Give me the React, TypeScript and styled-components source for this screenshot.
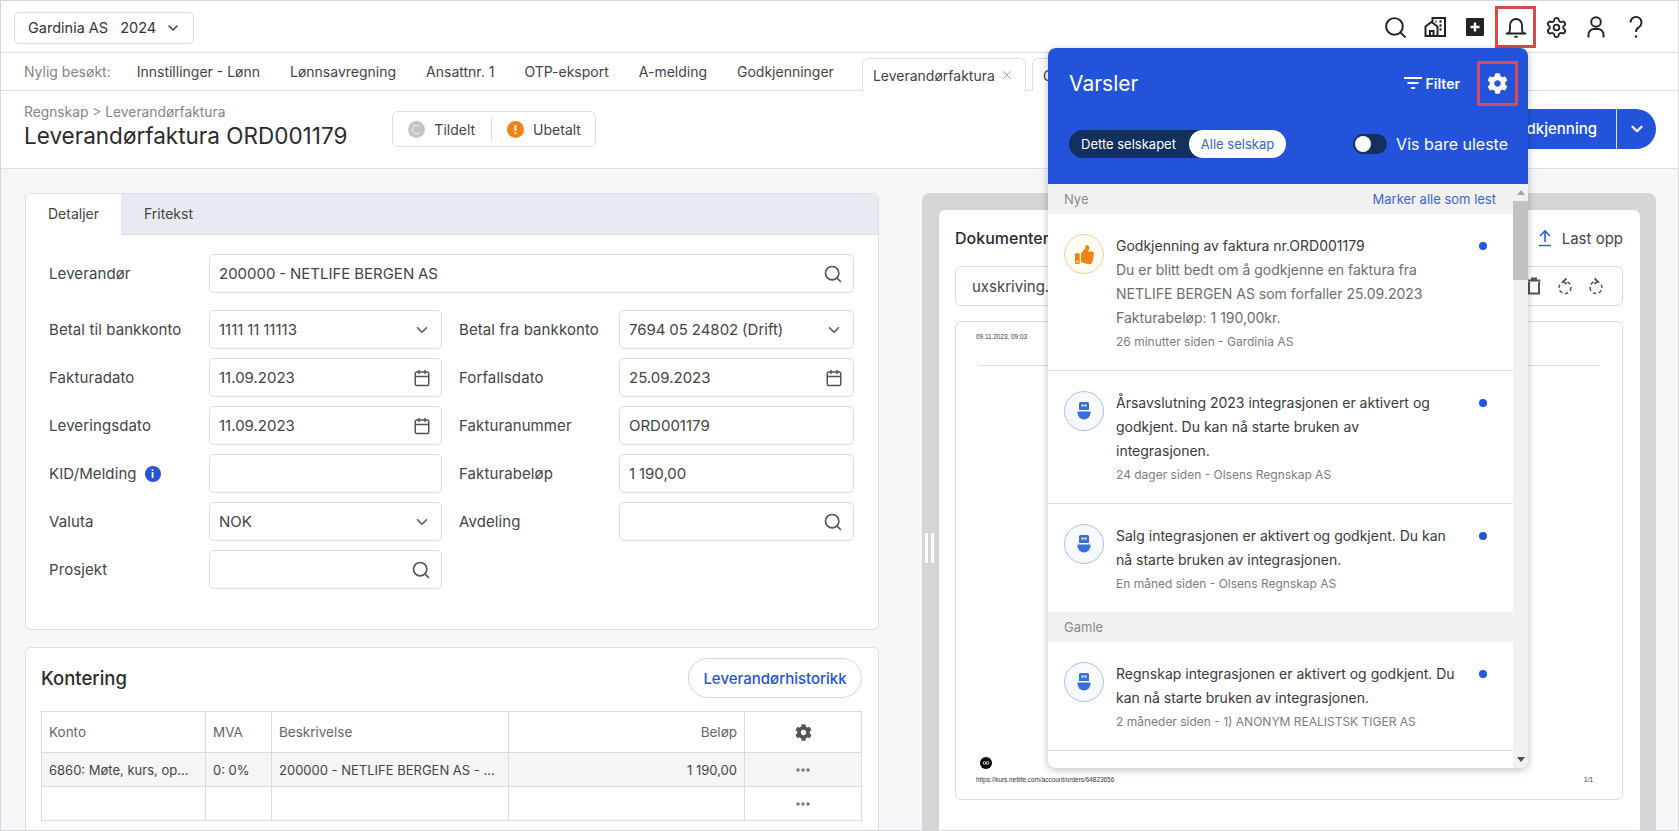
import React from 'react';
import styled, { createGlobalStyle } from 'styled-components';
import { Search, ChevronDown, Calendar, Settings, X } from 'lucide-react';
import { FaCog, FaThumbsUp } from 'react-icons/fa';

const Global = createGlobalStyle`
  html, body { margin: 0; padding: 0; height: 831px; overflow: hidden; background: #fff; }
  * { box-sizing: border-box; }
  body { font-family: Inter, "Liberation Sans", sans-serif; color: #333; }
`;

const Frame = styled.div`
  position: relative;
  width: 1679px;
  height: 831px;
  border: 1px solid #d3d6da;
  display: flex;
  flex-direction: column;
  overflow: hidden;
  background: #fff;
`;

const TopBar = styled.header`
  height: 52px;
  flex: none;
  border-bottom: 1px solid #dcdfe3;
  display: flex;
  align-items: center;
  justify-content: space-between;
  padding: 0 22px 0 13px;
`;
const CompanySelect = styled.button`
  width: 180px;
  height: 32px;
  margin-top: 2px;
  background: #fff;
  border: 1px solid #d9dce0;
  border-radius: 5px;
  display: flex;
  align-items: center;
  padding: 0 12px 0 13px;
  font: 400 14.5px Inter, sans-serif;
  color: #333;
  svg { margin-left: auto; }
`;
const Year = styled.span`
  margin-left: 12px;
`;
const IconBar = styled.div`
  display: flex;
  align-items: center;
  margin-top: 1px;
`;
const TopIcon = styled.div<{ $active?: boolean }>`
  position: relative;
  width: 40px;
  height: 42px;
  display: flex;
  align-items: center;
  justify-content: center;
  color: #222;
  ${p => p.$active && 'outline: 3px solid #d84a4a; outline-offset: -3px; width: 41px;'}
`;

const TabsRow = styled.nav`
  height: 38px;
  flex: none;
  border-bottom: 1px solid #dcdfe3;
  display: flex;
  align-items: center;
  padding-left: 23px;
  font-size: 14px;
`;
const TabsLabel = styled.span`
  color: #858585;
  margin-right: 26px;
`;
const TabLink = styled.a`
  color: #444;
  margin-right: 30px;
  white-space: nowrap;
`;
const ActiveTab = styled.div`
  height: 33px;
  align-self: flex-end;
  margin-bottom: -1px;
  width: 164px;
  margin-right: 6px;
  margin-left: -2px;
  background: #fff;
  border: 1px solid #dcdfe3;
  border-bottom: 0;
  border-radius: 6px 6px 0 0;
  display: flex;
  align-items: center;
  padding-left: 10px;
  color: #444;
  white-space: nowrap;
  svg { margin-left: 5px; color: #999; }
`;
const NextTab = styled(ActiveTab)`
  width: 120px;
  margin: 0 0 -1px;
`;

const PageHeader = styled.div`
  height: 78px;
  flex: none;
  border-bottom: 1px solid #dcdfe3;
  display: flex;
  align-items: flex-start;
  padding: 11px 22px 0 23px;
`;
const TitleBlock = styled.div`
  margin-right: 45px;
`;
const Breadcrumb = styled.div`
  font-size: 13.8px;
  line-height: 20px;
  color: #858585;
`;
const Title = styled.h1`
  margin: 0;
  font-size: 22.5px;
  font-weight: 400;
  line-height: 28px;
  color: #2b2b2b;
  white-space: nowrap;
`;
const StatusPill = styled.div`
  height: 36px;
  width: 204px;
  margin-top: 9px;
  border: 1px solid #dcdfe3;
  border-radius: 6px;
  display: flex;
  align-items: center;
  font-size: 14px;
  color: #444;
  padding-left: 15px;
`;
const StatusDivider = styled.span`
  width: 1px;
  height: 24px;
  background: #dcdfe3;
  margin: 0 15px 0 16px;
`;
const StatusIcon = styled.span<{ $tone: 'grey' | 'orange' }>`
  width: 17px;
  height: 17px;
  border-radius: 50%;
  margin-right: 9px;
  display: flex;
  align-items: center;
  justify-content: center;
  color: #fff;
  font-size: 12px;
  font-weight: 700;
  background: ${p => (p.$tone === 'grey' ? '#c3c4c6' : '#ef8412')};
`;
const GreyRing = styled.span`
  width: 9px;
  height: 9px;
  border-radius: 50%;
  border: 1.5px solid #eceded;
  border-right-color: transparent;
`;
const ApproveGroup = styled.div`
  margin-left: auto;
  margin-top: 7px;
  height: 40px;
  display: flex;
  background: #2453db;
  border-radius: 20px;
  color: #fff;
  font-size: 15px;
  font-weight: 500;
  align-items: center;
`;
const ApproveMain = styled.span`
  padding: 0 19px 0 24px;
  line-height: 40px;
  border-right: 1px solid #dfe6fa;
`;
const ApproveCaret = styled.span`
  width: 39px;
  display: flex;
  justify-content: center;
`;

const Main = styled.main`
  flex: 1;
  min-height: 0;
  background: #f4f6f8;
  display: flex;
  align-items: flex-start;
  padding: 24px 22px 0 24px;
  gap: 43px;
`;
const LeftColumn = styled.div`
  width: 854px;
  flex: none;
  display: flex;
  flex-direction: column;
  gap: 17px;
`;
const Panel = styled.section`
  background: #fff;
  border: 1px solid #dcdfe3;
  border-radius: 6px;
  overflow: hidden;
`;
const PanelTabs = styled.div`
  height: 41px;
  display: flex;
  background: #e6ebf2;
  border-bottom: 1px solid #d6dbe2;
  font-size: 14px;
  color: #444;
`;
const PanelTab = styled.div<{ $active?: boolean }>`
  width: ${p => (p.$active ? '95px' : 'auto')};
  padding-left: ${p => (p.$active ? '22px' : '23px')};
  line-height: 40px;
  height: ${p => (p.$active ? '41px' : '40px')};
  background: ${p => (p.$active ? '#fff' : 'transparent')};
`;
const FieldGrid = styled.div`
  display: grid;
  grid-template-columns: 160px 233px 177px 235px;
  row-gap: 9px;
  padding: 19px 0 40px 23px;
  align-items: center;
`;
const FieldLabel = styled.label<{ $right?: boolean }>`
  font-size: 15px;
  letter-spacing: 0.1px;
  color: #444;
  display: flex;
  align-items: center;
  gap: 8px;
  padding-left: ${p => (p.$right ? '17px' : '0')};
`;
const Field = styled.div<{ $wide?: boolean }>`
  height: 39px;
  border: 1px solid #d9dce0;
  border-radius: 5px;
  background: #fff;
  display: flex;
  align-items: center;
  justify-content: space-between;
  padding: 0 10px 0 9px;
  font-size: 15px;
  word-spacing: -0.4px;
  color: #444;
  ${p => p.$wide && 'grid-column: 2 / 5; margin-bottom: 8px;'}
  svg { color: #555; flex: none; }
`;
const WideLabel = styled(FieldLabel)`
  margin-bottom: 8px;
`;
const InfoDot = styled.span`
  width: 16px;
  height: 16px;
  border-radius: 50%;
  background: #2453db;
  color: #fff;
  font-size: 11px;
  font-weight: 700;
  display: flex;
  align-items: center;
  justify-content: center;
`;

const KonteringPanel = styled(Panel)`
  height: 220px;
  padding: 10px 16px 0 15px;
`;
const KonteringHead = styled.div`
  height: 40px;
  display: flex;
  align-items: center;
  justify-content: space-between;
  margin-bottom: 13px;
`;
const KonteringTitle = styled.h2`
  margin: 0;
  font-size: 18.5px;
  font-weight: 500;
  color: #2b2b2b;
`;
const OutlineButton = styled.button`
  width: 174px;
  height: 40px;
  border: 1px solid #d2d6db;
  border-radius: 20px;
  background: #fff;
  color: #2453db;
  font: 500 15px Inter, sans-serif;
  padding: 0;
`;
const Table = styled.table`
  width: 820px;
  border-collapse: collapse;
  table-layout: fixed;
  font-size: 13px;
  color: #444;
`;
const Th = styled.th<{ $w: number; $end?: boolean; $center?: boolean }>`
  width: ${p => p.$w}px;
  height: 41px;
  border: 1px solid #d9dce0;
  font-weight: 400;
  font-size: 13.5px;
  color: #666;
  padding: 0 7px;
  text-align: ${p => (p.$end ? 'right' : p.$center ? 'center' : 'left')};
  svg { display: block; margin: 0 auto; color: #555; }
`;
const Tr = styled.tr<{ $shade?: boolean }>`
  background: ${p => (p.$shade ? '#f5f5f5' : '#fff')};
`;
const Td = styled.td<{ $end?: boolean; $center?: boolean }>`
  height: 34px;
  border: 1px solid #d9dce0;
  padding: 0 7px;
  white-space: nowrap;
  overflow: hidden;
  text-align: ${p => (p.$end ? 'right' : p.$center ? 'center' : 'left')};
  svg { display: block; margin: 0 auto; color: #666; }
`;

const DocFrame = styled.section`
  position: relative;
  width: 734px;
  flex: none;
  align-self: stretch;
  background: #d3d5d6;
  border-radius: 8px 8px 0 0;
  padding: 17px 17px 0;
  display: flex;
`;
const Handle = styled.div`
  position: absolute;
  left: 3px;
  top: 340px;
  width: 9px;
  height: 30px;
  border-left: 3px solid #fff;
  border-right: 3px solid #fff;
`;
const DocCard = styled.div`
  flex: 1;
  background: #fff;
  border-radius: 6px 6px 0 0;
  padding: 14px 17px 0 16px;
`;
const DocHead = styled.div`
  height: 28px;
  display: flex;
  align-items: center;
  justify-content: space-between;
  margin-bottom: 14px;
`;
const DocTitle = styled.h3`
  margin: 0;
  font-size: 16px;
  font-weight: 500;
  color: #2b2b2b;
`;
const UploadLink = styled.div`
  display: flex;
  align-items: center;
  gap: 10px;
  font-size: 15px;
  color: #444;
`;
const FileBar = styled.div`
  height: 40px;
  border: 1px solid #d9dce0;
  border-radius: 6px;
  display: flex;
  align-items: center;
  padding: 0 17px 0 16px;
  font-size: 15px;
  color: #444;
  margin-bottom: 15px;
`;
const FileTools = styled.div`
  margin-left: auto;
  display: flex;
  gap: 13px;
  color: #555;
`;
const Preview = styled.div`
  height: 479px;
  border: 1px solid #d9dce0;
  border-radius: 6px;
  padding: 11px 20px 0;
  font-family: "Liberation Sans", sans-serif;
  font-size: 6.4px;
  color: #333;
  display: flex;
  flex-direction: column;
`;
const PreviewRule = styled.div`
  height: 1px;
  margin: 25px 2px 0 2px;
  width: 622px;
  background: #dcdcdc;
`;
const PreviewLogo = styled.div`
  margin-top: auto;
  margin-left: 4px;
  width: 12px;
  height: 12px;
  border-radius: 50%;
  background: #000;
  display: flex;
  align-items: center;
  justify-content: center;
`;
const PreviewFoot = styled.div`
  display: flex;
  justify-content: space-between;
  margin: 7px 9px 16px 0;
`;

const Popup = styled.aside`
  position: absolute;
  left: 1047px;
  top: 47px;
  width: 480px;
  height: 720px;
  border-radius: 8px;
  overflow: hidden;
  background: #fff;
  box-shadow: 0 2px 8px rgba(0, 0, 0, 0.25);
  display: flex;
  flex-direction: column;
  z-index: 5;
`;
const PopupHead = styled.div`
  height: 136px;
  flex: none;
  background: #2453db;
  color: #fff;
  padding: 0 20px 0 21px;
`;
const PopupTop = styled.div`
  height: 82px;
  display: flex;
  align-items: center;
  padding-bottom: 12px;
`;
const PopupTitle = styled.h2`
  margin: 0;
  flex: 1;
  font-size: 21px;
  font-weight: 400;
`;
const FilterButton = styled.div`
  display: flex;
  align-items: center;
  gap: 3px;
  font-size: 14px;
  font-weight: 600;
`;
const GearBox = styled.div`
  position: relative;
  width: 41px;
  height: 45px;
  margin-left: 17px;
  margin-right: -10px;
  border: 3px solid #d84a5a;
  display: flex;
  align-items: center;
  justify-content: center;
`;
const PopupControls = styled.div`
  display: flex;
  align-items: center;
  justify-content: space-between;
`;
const Segment = styled.div`
  width: 217px;
  height: 28px;
  border-radius: 14px;
  background: #12305e;
  display: flex;
  align-items: center;
  justify-content: space-between;
  padding-left: 12px;
  font-size: 13px;
`;
const SegmentOn = styled.span`
  width: 97px;
  height: 28px;
  border-radius: 14px;
  background: #fff;
  color: #3a5fcf;
  font-size: 13px;
  line-height: 28px;
  text-align: center;
`;
const UnreadToggle = styled.div`
  display: flex;
  align-items: center;
  gap: 9px;
  font-size: 16px;
`;
const Switch = styled.span`
  width: 34px;
  height: 20px;
  border-radius: 10px;
  background: #12305e;
  padding: 2px;
  display: flex;
`;
const Knob = styled.span`
  width: 16px;
  height: 16px;
  border-radius: 50%;
  background: #fff;
`;
const PopupBody = styled.div`
  flex: 1;
  min-height: 0;
  display: flex;
`;
const List = styled.div`
  width: 465px;
  flex: none;
`;
const Section = styled.div`
  height: 30px;
  background: #f1f1f1;
  display: flex;
  align-items: center;
  justify-content: space-between;
  padding: 0 16px;
  font-size: 13px;
  color: #8a8a8a;
`;
const MarkAll = styled.span`
  color: #3b66d8;
  margin-right: 1px;
`;
const Item = styled.article<{ $line?: boolean }>`
  display: flex;
  align-items: flex-start;
  padding: 20px 26px 16px 16px;
  border-bottom: ${p => (p.$line ? '1px solid #d9dce0' : '0')};
`;
const Badge = styled.div<{ $tone: 'orange' | 'blue' }>`
  width: 40px;
  height: 40px;
  flex: none;
  border-radius: 50%;
  display: flex;
  align-items: center;
  justify-content: center;
  margin-right: 12px;
  border: 1px solid ${p => (p.$tone === 'orange' ? '#f4cf98' : '#a9c1ec')};
  background: ${p => (p.$tone === 'orange' ? '#fffaf2' : '#f6f9ff')};
  color: ${p => (p.$tone === 'orange' ? '#ef8412' : '#3b6fd6')};
`;
const ItemText = styled.div`
  width: 346px;
  flex: none;
  font-size: 14px;
  line-height: 24px;
  color: #3a3a3a;
`;
const ItemBody = styled.div`
  color: #6e6e6e;
`;
const ItemMeta = styled.div`
  font-size: 12px;
  color: #7d7d7d;
`;
const UnreadDot = styled.span`
  width: 8px;
  height: 8px;
  border-radius: 50%;
  background: #2255e0;
  margin: 8px 0 0 17px;
  flex: none;
`;
const ScrollTrack = styled.div`
  width: 15px;
  flex: none;
  background: #f1f1f1;
  display: flex;
  flex-direction: column;
  align-items: center;
`;
const ScrollArrow = styled.span<{ $down?: boolean }>`
  flex: none;
  height: 17px;
  display: flex;
  align-items: center;
  &::before {
    content: '';
    border-left: 4px solid transparent;
    border-right: 4px solid transparent;
    ${p => (p.$down ? 'border-top: 5px solid #505050;' : 'border-bottom: 5px solid #a3a3a3;')}
  }
`;
const ScrollThumb = styled.span`
  width: 100%;
  height: 79px;
  background: #c1c1c1;
`;
const ScrollGap = styled.span`
  flex: 1;
`;

const BuildingIcon = () => (
  <svg width="24" height="24" viewBox="0 0 24 24" fill="none" stroke="currentColor" strokeWidth="2">
    <path d="M9.5 6.5V3H22v18H2.5V11.5L8.5 7l6 4.5V21" />
    <path d="M7 21v-5h3.5v5" />
    <path d="M16.5 6.5h2M16.5 10.5h2M16.5 14.5h2M12.5 6.5h1" strokeWidth="2.4" />
  </svg>
);
const PlusSquareIcon = () => (
  <svg width="18" height="18" viewBox="0 0 18 18">
    <rect width="18" height="18" rx="1" fill="#232323" />
    <path d="M9 4.5v9M4.5 9h9" stroke="#fff" strokeWidth="2.4" />
  </svg>
);
const BellIcon = () => (
  <svg width="24" height="24" viewBox="0 0 24 24" fill="none" stroke="currentColor" strokeWidth="1.8">
    <path d="M2.5 18.5h19" strokeLinecap="round" />
    <path d="M4.5 18.5c1-1 1.5-2.5 1.5-4.500v-4a6 6 0 0 1 12 0v4c0 2 .5 3.500 1.500 4.500" />
    <ellipse cx="12" cy="21.8" rx="2" ry="1" fill="currentColor" stroke="none" />
  </svg>
);
const UserIcon = () => (
  <svg width="24" height="24" viewBox="0 0 24 24" fill="none" stroke="currentColor" strokeWidth="1.9">
    <circle cx="12" cy="7" r="4.8" />
    <path d="M4.500 22.500v-3a5.500 5.500 0 0 1 5.500-5.500h4a5.500 5.500 0 0 1 5.500 5.500v3" />
  </svg>
);
const HelpIcon = () => (
  <svg width="24" height="24" viewBox="0 0 24 24" fill="none" stroke="currentColor" strokeWidth="1.9">
    <path d="M6.500 7.500a5.500 5.500 0 1 1 8.500 4.500c-2 1.300-3 2.500-3 5" />
    <circle cx="12" cy="21.5" r="1.2" fill="currentColor" stroke="none" />
  </svg>
);
const FilterIcon = () => (
  <svg width="20" height="16" viewBox="0 0 20 16" fill="none" stroke="#fff" strokeWidth="2">
    <path d="M1 3h18M4.500 8h11M8 13h4" />
  </svg>
);
const RobotIcon = () => (
  <svg width="20" height="22" viewBox="0 0 20 22" fill="currentColor">
    <path d="M6.500 2h7a1.500 1.500 0 0 1 1.500 1.500V10H5V3.500A1.500 1.500 0 0 1 6.500 2z" />
    <rect x="7.5" y="4.5" width="2" height="2" fill="#f6f9ff" />
    <rect x="10.5" y="4.5" width="2" height="2" fill="#f6f9ff" />
    <path d="M3.500 11.500h13v1.500a6.500 6.500 0 0 1-13 0z" />
  </svg>
);
const UploadIcon = () => (
  <svg width="14" height="18" viewBox="0 0 14 18" fill="none" stroke="#2f5fd8" strokeWidth="1.6">
    <path d="M7 13V2M2 7l5-5 5 5M1 16.500h12" />
  </svg>
);
const TrashIcon = () => (
  <svg width="18" height="18" viewBox="0 0 18 18" fill="none" stroke="#555" strokeWidth="2">
    <path d="M4 5v11.500h10V5M2.500 3.500h13M6 1.500h6" />
  </svg>
);
const RotateIcon = ({ flip }: { flip?: boolean }) => (
  <svg width="18" height="18" viewBox="0 0 18 18" fill="none" stroke="#555" strokeWidth="1.5" style={flip ? { transform: 'scaleX(-1)' } : undefined}>
    <circle cx="9" cy="10.5" r="6" strokeDasharray="3.500 2.500" />
    <path d="M10.500 1.500L7.500 4.300l3 2.800" strokeWidth="1.8" />
  </svg>
);
const DotsIcon = () => (
  <svg width="18" height="6" viewBox="0 0 18 6" fill="#777">
    <circle cx="4" cy="3" r="1.7" />
    <circle cx="9" cy="3" r="1.7" />
    <circle cx="14" cy="3" r="1.7" />
  </svg>
);

const tabs = ['Innstillinger - Lønn', 'Lønnsavregning', 'Ansattnr. 1', 'OTP-eksport', 'A-melding', 'Godkjenninger'];

export default function App() {
  return (
    <>
      <Global />
      <Frame>
        <TopBar>
          <CompanySelect>
            Gardinia AS<Year>2024</Year>
            <ChevronDown size={16} strokeWidth={2} />
          </CompanySelect>
          <IconBar>
            <TopIcon><Search size={25} strokeWidth={1.9} /></TopIcon>
            <TopIcon><BuildingIcon /></TopIcon>
            <TopIcon><PlusSquareIcon /></TopIcon>
            <TopIcon $active><BellIcon /></TopIcon>
            <TopIcon><Settings size={23} strokeWidth={1.9} /></TopIcon>
            <TopIcon><UserIcon /></TopIcon>
            <TopIcon><HelpIcon /></TopIcon>
          </IconBar>
        </TopBar>

        <TabsRow>
          <TabsLabel>Nylig besøkt:</TabsLabel>
          {tabs.map(t => <TabLink key={t}>{t}</TabLink>)}
          <ActiveTab>Leverandørfaktura<X size={14} strokeWidth={1.5} /></ActiveTab>
          <NextTab>G</NextTab>
        </TabsRow>

        <PageHeader>
          <TitleBlock>
            <Breadcrumb>Regnskap &gt; Leverandørfaktura</Breadcrumb>
            <Title>Leverandørfaktura ORD001179</Title>
          </TitleBlock>
          <StatusPill>
            <StatusIcon $tone="grey"><GreyRing /></StatusIcon>Tildelt
            <StatusDivider />
            <StatusIcon $tone="orange">!</StatusIcon>Ubetalt
          </StatusPill>
          <ApproveGroup>
            <ApproveMain>Godkjenning</ApproveMain>
            <ApproveCaret><ChevronDown size={18} strokeWidth={3} color="#fff" /></ApproveCaret>
          </ApproveGroup>
        </PageHeader>

        <Main>
          <LeftColumn>
            <Panel>
              <PanelTabs>
                <PanelTab $active>Detaljer</PanelTab>
                <PanelTab>Fritekst</PanelTab>
              </PanelTabs>
              <FieldGrid>
                <WideLabel>Leverandør</WideLabel>
                <Field $wide>200000 - NETLIFE BERGEN AS<Search size={20} /></Field>

                <FieldLabel>Betal til bankkonto</FieldLabel>
                <Field>1111 11 11113<ChevronDown size={18} /></Field>
                <FieldLabel $right>Betal fra bankkonto</FieldLabel>
                <Field>7694 05 24802 (Drift)<ChevronDown size={18} /></Field>

                <FieldLabel>Fakturadato</FieldLabel>
                <Field>11.09.2023<Calendar size={18} /></Field>
                <FieldLabel $right>Forfallsdato</FieldLabel>
                <Field>25.09.2023<Calendar size={18} /></Field>

                <FieldLabel>Leveringsdato</FieldLabel>
                <Field>11.09.2023<Calendar size={18} /></Field>
                <FieldLabel $right>Fakturanummer</FieldLabel>
                <Field>ORD001179</Field>

                <FieldLabel>KID/Melding<InfoDot>i</InfoDot></FieldLabel>
                <Field />
                <FieldLabel $right>Fakturabeløp</FieldLabel>
                <Field>1 190,00</Field>

                <FieldLabel>Valuta</FieldLabel>
                <Field>NOK<ChevronDown size={18} /></Field>
                <FieldLabel $right>Avdeling</FieldLabel>
                <Field><span /><Search size={20} /></Field>

                <FieldLabel>Prosjekt</FieldLabel>
                <Field><span /><Search size={20} /></Field>
              </FieldGrid>
            </Panel>

            <KonteringPanel>
              <KonteringHead>
                <KonteringTitle>Kontering</KonteringTitle>
                <OutlineButton>Leverandørhistorikk</OutlineButton>
              </KonteringHead>
              <Table>
                <thead>
                  <tr>
                    <Th $w={164}>Konto</Th>
                    <Th $w={66}>MVA</Th>
                    <Th $w={237}>Beskrivelse</Th>
                    <Th $w={236} $end>Beløp</Th>
                    <Th $w={117} $center><FaCog size={17} /></Th>
                  </tr>
                </thead>
                <tbody>
                  <Tr $shade>
                    <Td>6860: Møte, kurs, op...</Td>
                    <Td>0: 0%</Td>
                    <Td>200000 - NETLIFE BERGEN AS - ...</Td>
                    <Td $end>1 190,00</Td>
                    <Td $center><DotsIcon /></Td>
                  </Tr>
                  <Tr>
                    <Td /><Td /><Td /><Td />
                    <Td $center><DotsIcon /></Td>
                  </Tr>
                </tbody>
              </Table>
            </KonteringPanel>
          </LeftColumn>

          <DocFrame>
            <Handle />
            <DocCard>
              <DocHead>
                <DocTitle>Dokumenter</DocTitle>
                <UploadLink><UploadIcon />Last opp</UploadLink>
              </DocHead>
              <FileBar>
                uxskriving.pdf
                <FileTools><TrashIcon /><RotateIcon /><RotateIcon flip /></FileTools>
              </FileBar>
              <Preview>
                <div>09.11.2023, 09:03</div>
                <PreviewRule />
                <PreviewLogo>
                  <svg width="8" height="4" viewBox="0 0 8 4" fill="none" stroke="#fff" strokeWidth="0.8">
                    <circle cx="2.5" cy="2" r="1.4" />
                    <circle cx="5.5" cy="2" r="1.4" />
                  </svg>
                </PreviewLogo>
                <PreviewFoot>
                  <span>https://kurs.netlife.com/account/orders/64823656</span>
                  <span>1/1</span>
                </PreviewFoot>
              </Preview>
            </DocCard>
          </DocFrame>
        </Main>

        <Popup>
          <PopupHead>
            <PopupTop>
              <PopupTitle>Varsler</PopupTitle>
              <FilterButton><FilterIcon />Filter</FilterButton>
              <GearBox><FaCog size={21} color="#fff" /></GearBox>
            </PopupTop>
            <PopupControls>
              <Segment>Dette selskapet<SegmentOn>Alle selskap</SegmentOn></Segment>
              <UnreadToggle><Switch><Knob /></Switch>Vis bare uleste</UnreadToggle>
            </PopupControls>
          </PopupHead>
          <PopupBody>
            <List>
              <Section>Nye<MarkAll>Marker alle som lest</MarkAll></Section>
              <Item $line>
                <Badge $tone="orange"><FaThumbsUp size={19} /></Badge>
                <ItemText>
                  Godkjenning av faktura nr.ORD001179
                  <ItemBody>Du er blitt bedt om å godkjenne en faktura fra NETLIFE BERGEN AS som forfaller 25.09.2023<br />Fakturabeløp: 1 190,00kr.</ItemBody>
                  <ItemMeta>26 minutter siden - Gardinia AS</ItemMeta>
                </ItemText>
                <UnreadDot />
              </Item>
              <Item $line>
                <Badge $tone="blue"><RobotIcon /></Badge>
                <ItemText>
                  Årsavslutning 2023 integrasjonen er aktivert og godkjent. Du kan nå starte bruken av<br />integrasjonen.
                  <ItemMeta>24 dager siden - Olsens Regnskap AS</ItemMeta>
                </ItemText>
                <UnreadDot />
              </Item>
              <Item>
                <Badge $tone="blue"><RobotIcon /></Badge>
                <ItemText>
                  Salg integrasjonen er aktivert og godkjent. Du kan nå starte bruken av integrasjonen.
                  <ItemMeta>En måned siden - Olsens Regnskap AS</ItemMeta>
                </ItemText>
                <UnreadDot />
              </Item>
              <Section>Gamle</Section>
              <Item $line>
                <Badge $tone="blue"><RobotIcon /></Badge>
                <ItemText>
                  Regnskap integrasjonen er aktivert og godkjent. Du kan nå starte bruken av integrasjonen.
                  <ItemMeta>2 måneder siden - 1) ANONYM REALISTSK TIGER AS</ItemMeta>
                </ItemText>
                <UnreadDot />
              </Item>
            </List>
            <ScrollTrack>
              <ScrollArrow />
              <ScrollThumb />
              <ScrollGap />
              <ScrollArrow $down />
            </ScrollTrack>
          </PopupBody>
        </Popup>
      </Frame>
    </>
  );
}
